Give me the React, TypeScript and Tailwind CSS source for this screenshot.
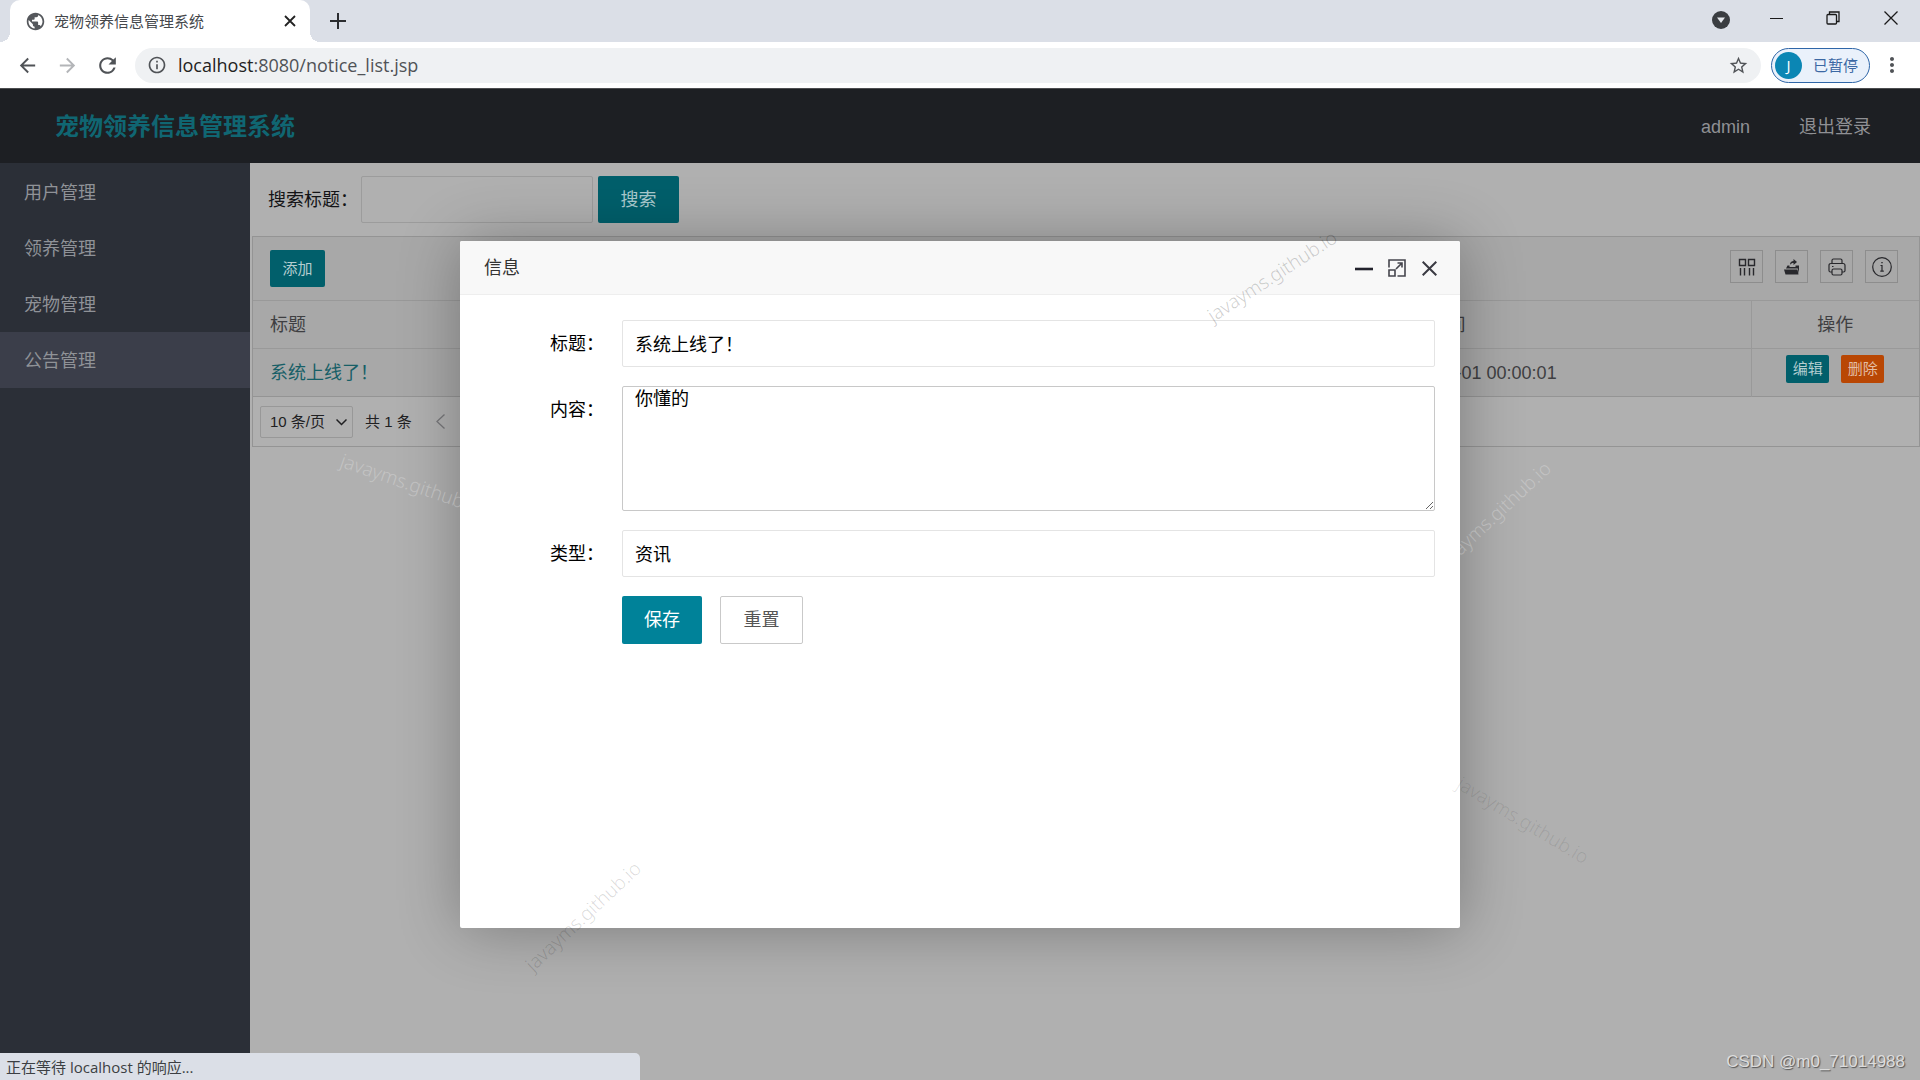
import { useState } from "react";
import {
  MdArrowBack,
  MdArrowForward,
  MdInfoOutline,
  MdMoreVert,
  MdPublic,
  MdRefresh,
  MdStarBorder,
} from "react-icons/md";

const menu = ["用户管理", "领养管理", "宠物管理", "公告管理"];

const marks = [
  { box: "left-[1187px] top-[176px]", turn: "-rotate-[33deg]", color: "text-black/20" },
  { box: "left-[327px] top-[384px]", turn: "rotate-[19deg]", color: "text-white/25" },
  { box: "left-[1408px] top-[416px]", turn: "-rotate-[43deg]", color: "text-white/25" },
  { box: "left-[1438px] top-[720px]", turn: "rotate-[31deg]", color: "text-black/10" },
  { box: "left-[498px] top-[816px]", turn: "-rotate-[43deg]", color: "text-black/15" },
];

function BrowserBar() {
  return (
    <header className="font-['Open_Sans','Noto_Sans_CJK_SC',sans-serif]">
      <div className="flex h-[42px] items-stretch bg-[#dbdfe7] pl-[10px]">
        <div className="relative flex w-[300px] items-center rounded-t-[10px] bg-white pl-[15px] pr-[14px]">
          <span className="absolute -left-[10px] bottom-0 h-[10px] w-[10px] bg-[radial-gradient(circle_at_0_0,#dbdfe7_10px,white_10px)]" />
          <span className="absolute -right-[10px] bottom-0 h-[10px] w-[10px] bg-[radial-gradient(circle_at_100%_0,#dbdfe7_10px,white_10px)]" />
          <MdPublic size={21} className="text-[#55585c]" />
          <span className="ml-2 flex-1 text-[15px] text-[#45484c]">宠物领养信息管理系统</span>
          <button aria-label="关闭标签页" className="text-[#222]">
            <svg width="12" height="12" viewBox="0 0 12 12" stroke="currentColor" strokeWidth="1.8">
              <path d="M1 1l10 10M11 1L1 11" />
            </svg>
          </button>
        </div>
        <button aria-label="新标签页" className="ml-5 text-[#2b2d30]">
          <svg width="16" height="16" viewBox="0 0 16 16" stroke="currentColor" strokeWidth="2">
            <path d="M8 0v16M0 8h16" />
          </svg>
        </button>
        <div className="ml-auto flex h-9 items-center text-[#1a1a1a]">
          <button aria-label="搜索标签页" className="mr-10 mt-1">
            <svg width="18" height="18" viewBox="0 0 18 18">
              <circle cx="9" cy="9" r="9" fill="#3a3d41" />
              <path d="M5 6.5h8L9 12z" fill="#e4e7ec" />
            </svg>
          </button>
          <button aria-label="最小化" className="mr-[43px]">
            <svg width="13" height="13" viewBox="0 0 13 13" stroke="currentColor">
              <path d="M0 6.5h13" />
            </svg>
          </button>
          <button aria-label="还原" className="mr-11">
            <svg width="14" height="14" viewBox="0 0 14 14" fill="none" stroke="currentColor" strokeWidth="1.3">
              <rect x="1" y="3.5" width="9.5" height="9.5" rx="1" />
              <path d="M3.5 3.5V1H13v9.5h-2.5" />
            </svg>
          </button>
          <button aria-label="关闭" className="mr-[22px]">
            <svg width="14" height="14" viewBox="0 0 14 14" stroke="currentColor" strokeWidth="1.3">
              <path d="M.5.5l13 13M13.5.5l-13 13" />
            </svg>
          </button>
        </div>
      </div>
      <div className="flex h-[46px] items-center bg-white pl-4 pr-4 text-[#505357]">
        <button aria-label="后退"><MdArrowBack size={23} /></button>
        <button aria-label="前进" className="ml-[17px] text-[#b3b5b8]"><MdArrowForward size={23} /></button>
        <button aria-label="刷新" className="ml-4"><MdRefresh size={25} /></button>
        <div className="ml-[15px] flex h-[35px] flex-1 items-center rounded-full bg-[#eff1f3] pl-3 pr-3">
          <MdInfoOutline size={20} />
          <div className="ml-[11px] flex-1 text-[18px]">
            <span className="text-[#222]">localhost</span>:8080/notice_list.jsp
          </div>
          <MdStarBorder size={21} />
        </div>
        <button className="ml-[10px] flex h-[35px] w-[99px] items-center rounded-full border border-[#2f66a8] bg-[#eaf1fb] pl-[3px] text-[15px] text-[#3c68a4]">
          <span className="flex h-[27px] w-[27px] items-center justify-center rounded-full bg-[#0b86b4] text-white">J</span>
          <span className="ml-[11px]">已暂停</span>
        </button>
        <button aria-label="菜单" className="ml-[10px]"><MdMoreVert size={24} /></button>
      </div>
    </header>
  );
}

function ToolIcons() {
  const box = "flex h-[33px] w-[33px] items-center justify-center border border-[#8d8d8d] text-[#28282c]";
  return (
    <div className="flex gap-3 pt-[13px]">
      <button aria-label="筛选列" className={box}>
        <svg width="18" height="18" viewBox="0 0 18 18" fill="none" stroke="currentColor" strokeWidth="1.4">
          <path d="M1.5 1.5h6v6h-6zM10.5 1.5h6v6h-6zM2.5 10v7.5M6.5 10v7.5M11.5 10v7.5M15.5 10v7.5" />
        </svg>
      </button>
      <button aria-label="导出" className={box}>
        <svg width="18" height="18" viewBox="0 0 18 18" fill="currentColor">
          <path d="M1 11.5h13.5l1 5H2.5zM3 10.5l1.5-3h2V9h6V7.5h3.5v8l-1.2-5zM7 7c0-3 1.5-4 3.5-4V1l3.5 3-3.5 3V5C9 5 8 5.5 7 7z" />
        </svg>
      </button>
      <button aria-label="打印" className={box}>
        <svg width="18" height="18" viewBox="0 0 18 18" fill="none" stroke="currentColor" strokeWidth="1.2">
          <path d="M4 5.5V2.5Q4 1 5.5 1h7Q14 1 14 2.5v3M4 14H2.5Q1 14 1 12.5v-5Q1 5.500 3 5.5h12q2 0 2 2v5q0 1.5-1.5 1.5H14" />
          <rect x="4" y="11" width="10" height="6" rx="1.5" />
          <path d="M4 8.5h1.5" />
        </svg>
      </button>
      <button aria-label="提示" className={box}>
        <svg width="20" height="20" viewBox="0 0 20 20" fill="none" stroke="currentColor" strokeWidth="1.2">
          <circle cx="10" cy="10" r="9.3" />
          <path d="M8.5 8.5H10V14M8.3 14.2h3.5M9.3 5.7h1.4" />
        </svg>
      </button>
    </div>
  );
}

function NoticeTable() {
  return (
    <div className="ml-[2px] border border-[#949494]">
      <div className="flex h-[63px] justify-between bg-[#a8a8a8] pl-[17px] pr-[21px]">
        <button className="mt-[13px] h-[37px] w-[55px] rounded-[2px] bg-[#015f6b] text-[15px] text-[#b4cdd0]">添加</button>
        <ToolIcons />
      </div>
      <table className="w-full table-fixed border-collapse bg-[#a8a8a8] text-left text-[#3f3f42]">
        <thead>
          <tr className="h-12 border-y border-[#999]">
            <th className="pl-[17px] font-normal">标题</th>
            <th className="pl-[17px] font-normal">内容</th>
            <th className="pl-[17px] font-normal">类型</th>
            <th className="pl-[17px] font-normal">发布时间</th>
            <th className="w-[168px] border-l border-[#999] text-center font-normal">操作</th>
          </tr>
        </thead>
        <tbody>
          <tr className="h-12 border-b border-[#949494]">
            <td className="pl-[17px]">
              <a href="#notice" className="text-[#175f67]">系统上线了！</a>
            </td>
            <td className="pl-[17px]">你懂的</td>
            <td className="pl-[17px]">资讯</td>
            <td className="pl-[13px]">2021-01-01 00:00:01</td>
            <td className="border-l border-[#999] pb-[7px]">
              <div className="flex justify-center gap-3">
                <button className="h-7 w-[43px] rounded-[2px] bg-[#015f6b] text-[15px] text-[#b4cdd0]">编辑</button>
                <button className="h-7 w-[43px] rounded-[2px] bg-[#b94704] text-[15px] text-[#e3bda5]">删除</button>
              </div>
            </td>
          </tr>
        </tbody>
      </table>
      <div className="flex h-[49px] items-center pl-[7px] text-[15px] text-[#202022]">
        <div className="relative">
          <select aria-label="每页条数" className="h-8 w-[93px] appearance-none rounded-[2px] border border-[#989898] pl-[9px]">
            <option>10 条/页</option>
          </select>
          <svg className="pointer-events-none absolute right-[6px] top-[12px]" width="11" height="8" viewBox="0 0 11 8" fill="none" stroke="currentColor" strokeWidth="1.5">
            <path d="M.5 1.5l5 5 5-5" />
          </svg>
        </div>
        <span className="ml-3">共 1 条</span>
        <button aria-label="上一页" className="ml-6 text-[#77777a]">
          <svg width="9" height="15" viewBox="0 0 9 15" fill="none" stroke="currentColor" strokeWidth="1.3">
            <path d="M8.5.5l-7.5 7 7.5 7" />
          </svg>
        </button>
      </div>
    </div>
  );
}

function NoticeDialog() {
  const [title, setTitle] = useState("系统上线了！");
  const [content, setContent] = useState("你懂的");
  const [type, setType] = useState("资讯");

  const label = "w-36 shrink-0 pt-3 text-right";
  const field = "h-[47px] flex-1 rounded-[2px] border border-[#e4e4e4] px-3";

  return (
    <div role="dialog" aria-label="信息" className="h-[687px] w-[1000px] max-w-full rounded-[2px] bg-white text-black shadow-[1px_1px_62px_rgba(0,0,0,0.3)]">
      <div className="flex h-[54px] items-center rounded-t-[2px] border-b border-[#eee] bg-[#f8f8f8] pl-6 pr-[23px] pt-[2px] text-[#333]">
        <h2 className="flex-1">信息</h2>
        <button aria-label="最小化" className="mr-[15px] text-[#22222c]">
          <svg width="18" height="18" viewBox="0 0 18 18" stroke="currentColor" strokeWidth="2.6">
            <path d="M0 10h18" />
          </svg>
        </button>
        <button aria-label="最大化" className="mr-4 text-[#45454d]">
          <svg width="18" height="18" viewBox="0 0 18 18" fill="none" stroke="currentColor" strokeWidth="1.6">
            <path d="M1 8.5V1h16v16H9.5M1 11h6v6H1zM8 10l6-6M9.5 4H14v4.5" />
          </svg>
        </button>
        <button aria-label="关闭" className="text-[#3a3a42]">
          <svg width="15" height="15" viewBox="0 0 15 15" stroke="currentColor" strokeWidth="2">
            <path d="M.7.7l13.6 13.6M14.3.7L.7 14.3" />
          </svg>
        </button>
      </div>
      <form className="flex flex-col gap-[19px] pr-[25px] pt-[25px]">
        <div className="flex gap-[18px]">
          <label htmlFor="title" className={label}>标题：</label>
          <input id="title" className={field} value={title} onChange={(e) => setTitle(e.target.value)} />
        </div>
        <div className="flex gap-[18px]">
          <label htmlFor="content" className={label}>内容：</label>
          <textarea
            id="content"
            className="h-[125px] flex-1 resize rounded-[2px] border border-[#c8c8c8] px-3 leading-6"
            value={content}
            onChange={(e) => setContent(e.target.value)}
          />
        </div>
        <div className="flex gap-[18px]">
          <label htmlFor="type" className={label}>类型：</label>
          <input id="type" className={field} value={type} onChange={(e) => setType(e.target.value)} />
        </div>
        <div className="flex gap-[18px] pl-[162px]">
          <button type="button" className="h-12 w-20 rounded-[2px] bg-[#008299] text-white">保存</button>
          <button type="reset" className="h-12 w-[83px] rounded-[2px] border border-[#c9c9c9] text-[#555]">重置</button>
        </div>
      </form>
    </div>
  );
}

export default function App() {
  return (
    <div className="relative flex min-h-screen flex-col overflow-hidden bg-[#b0b0b0] font-['Liberation_Sans','Noto_Sans_CJK_SC',sans-serif] text-[18px] leading-6">
      <BrowserBar />
      <div className="relative flex flex-1 flex-col">
        <div className="flex h-[75px] items-center border-t border-[#4c4d50] bg-[#1d1f23] pl-[55px] pr-[49px] pt-[1px] text-[#8f9094]">
          <h1 className="flex-1 text-2xl font-bold text-[#106672]">宠物领养信息管理系统</h1>
          <a href="#admin">admin</a>
          <a href="#logout" className="ml-[49px]">退出登录</a>
        </div>
        <div className="flex flex-1">
          <nav className="w-[250px] shrink-0 bg-[#2b2f37] pt-[1px] text-[#8f9297]">
            {menu.map((m) => (
              <a
                key={m}
                href={`#${m}`}
                className={`flex h-14 items-center pl-6 pt-[1px] ${m === "公告管理" ? "bg-[#3b3e4a]" : ""}`}
              >
                {m}
              </a>
            ))}
          </nav>
          <main className="min-w-0 flex-1">
            <form className="flex h-[73px] items-center pl-[18px]">
              <label htmlFor="search" className="w-[93px] text-[#141416]">搜索标题：</label>
              <input id="search" className="h-[47px] w-[232px] rounded-[2px] border border-[#9c9c9c] px-3" />
              <button type="button" className="ml-[5px] h-[47px] w-[81px] rounded-[2px] bg-[#015f6b] text-[#a9c9cd]">搜索</button>
            </form>
            <NoticeTable />
          </main>
        </div>

        <div className="absolute inset-0 flex items-center justify-center">
          <NoticeDialog />
        </div>
        {marks.map((m) => (
          <span
            key={m.box}
            className={`pointer-events-none absolute w-[170px] text-center font-['Noto_Sans',sans-serif] text-[19px] font-light ${m.box} ${m.turn} ${m.color}`}
          >
            javayms.github.io
          </span>
        ))}
        <div className="absolute bottom-0 left-0 h-[27px] w-1/3 rounded-tr-[5px] bg-[#dbdfe7] pl-[6px] pt-[2px] font-['Open_Sans','Noto_Sans_CJK_SC',sans-serif] text-[15px] text-[#3c3f43]">
          正在等待 localhost 的响应...
        </div>
        <div className="absolute bottom-[6px] right-[15px] text-[17px] text-[#dcdcdc] [text-shadow:1px_1px_1px_#555]">
          CSDN @m0_71014988
        </div>
      </div>
    </div>
  );
}
